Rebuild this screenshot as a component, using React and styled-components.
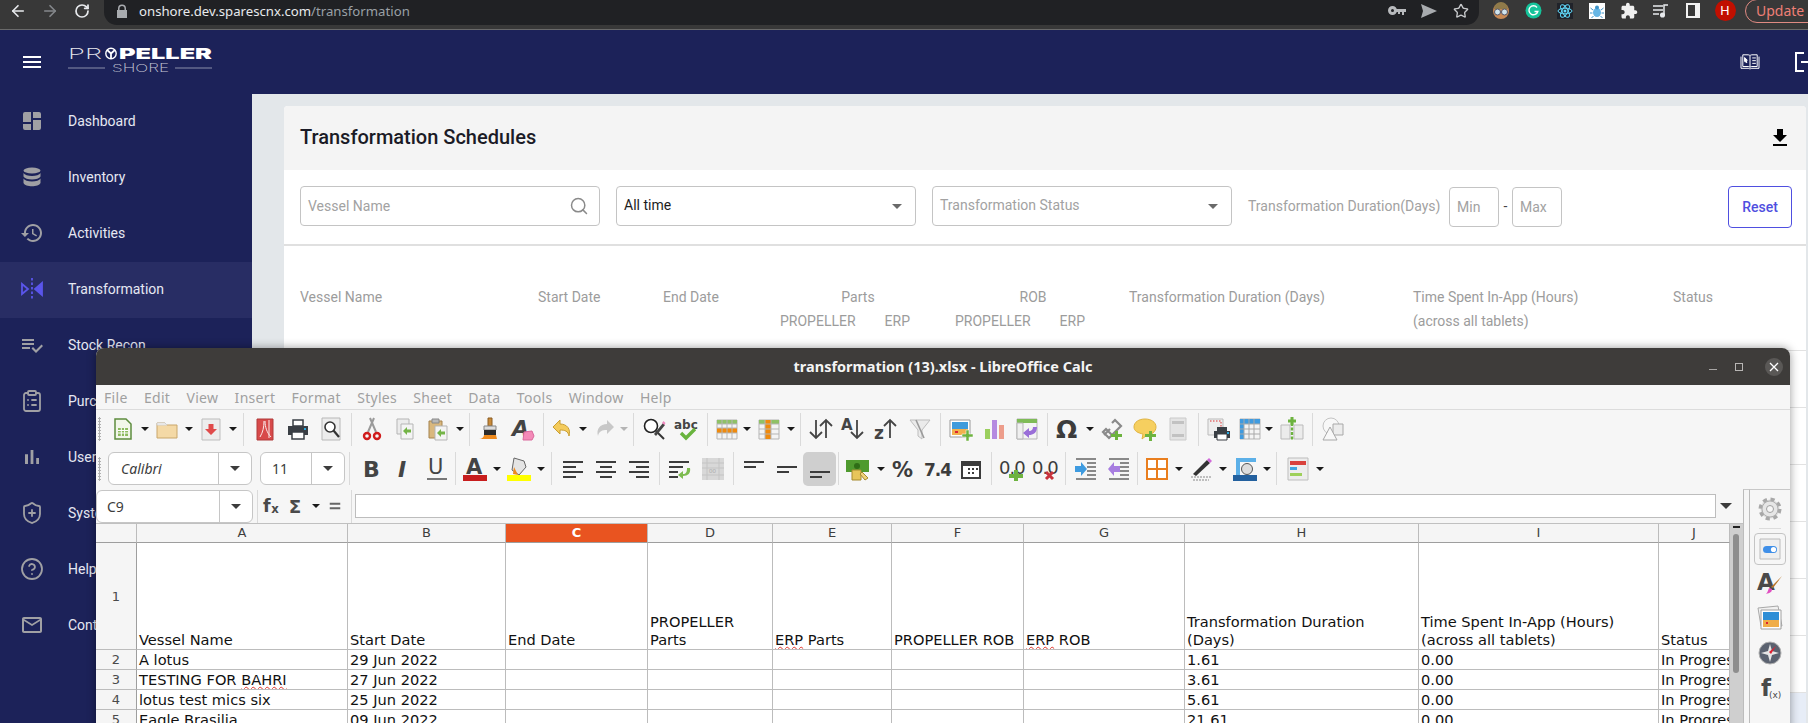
import styled, { createGlobalStyle } from "styled-components";
import { ArrowLeft, ArrowRight, RotateCw, Star, Search, ClipboardList, ShieldPlus, CircleHelp } from "lucide-react";

const GlobalStyle = createGlobalStyle`
  html, body { margin: 0; padding: 0; width: 1808px; height: 723px; overflow: hidden; background: #fff; }
  * { box-sizing: border-box; }
`;

const Page = styled.div`
  position: relative;
  width: 1808px;
  height: 723px;
  overflow: hidden;
  font-family: Roboto, "Liberation Sans", sans-serif;
`;

/* browser chrome */
const BrowserBar = styled.div`
  height: 30px;
  background: #383838;
  border-bottom: 1px solid #6a6a6a;
  display: flex;
  padding-left: 2px;
`;
const BarSlot = styled.div`
  width: 32px;
  height: 21px;
  flex: none;
  display: flex;
  align-items: center;
  justify-content: center;
  color: ${(p) => p.$color || "#e8eaed"};
`;
const Omnibox = styled.div`
  width: 1375px;
  height: 25px;
  margin-left: 6px;
  margin-right: 6px;
  padding: 0 2px 4px 12px;
  flex: none;
  background: #202124;
  border-radius: 0 0 13px 13px;
  display: flex;
  align-items: center;
`;
const Url = styled.div`
  margin-left: 11px;
  flex: 1;
  font-family: "Noto Sans", sans-serif;
  font-size: 13.2px;
  color: #e8eaed;
  span { color: #9aa0a6; }
`;
const UpdatePill = styled.div`
  margin-left: 4px;
  width: 90px;
  height: 24px;
  margin-top: -1px;
  flex: none;
  border: 1px solid #e08a82;
  border-radius: 12px;
  padding-left: 10px;
  font-family: "Noto Sans", sans-serif;
  font-size: 14px;
  line-height: 21px;
  color: #ee7f76;
`;
const Avatar = styled.div`
  width: 21px;
  height: 21px;
  border-radius: 50%;
  background: #c10f00;
  color: #fff;
  font-size: 13px;
  text-align: center;
  line-height: 21px;
`;

/* app header */
const Header = styled.header`
  height: 64px;
  background: #1c2259;
  display: flex;
  align-items: center;
  padding-left: 20px;
  color: #fff;
`;
const Actions = styled.div`
  margin-left: auto;
  margin-right: -16px;
  display: flex;
  align-items: center;
  gap: 34px;
`;
const LogoWrap = styled.div`
  margin-left: 24px;
  display: flex;
`;

const Body = styled.div`
  display: flex;
  height: 629px;
`;
const Sidebar = styled.nav`
  width: 252px;
  flex: none;
  background: #1c2259;
`;
const NavItem = styled.div`
  height: 56px;
  padding-left: 20px;
  padding-bottom: 2px;
  display: flex;
  align-items: center;
  gap: 24px;
  font-size: 14px;
  color: #e6e8f2;
  background: ${(p) => (p.$active ? "#282d64" : "transparent")};
  svg { flex: none; color: ${(p) => (p.$active ? "#5a55ea" : "#a0a0a4")}; }
`;

const Main = styled.main`
  flex: 1;
  background: #e3e7ea;
  padding: 12px 2px 0 32px;
`;
const Card = styled.section`
  background: #fff;
  border-radius: 4px 4px 0 0;
  overflow: hidden;
`;
const CardHead = styled.div`
  height: 64px;
  background: #f4f4f4;
  padding: 0 14px 0 16px;
  display: flex;
  align-items: center;
  justify-content: space-between;
`;
const CardTitle = styled.h1`
  margin: 0 0 2px;
  font-size: 20px;
  font-weight: 500;
  color: #1b1b26;
`;
const Filters = styled.div`
  height: 76px;
  padding: 16px 14px 0 16px;
  border-bottom: 2px solid #e0e0e0;
  display: flex;
  align-items: flex-start;
`;
const Field = styled.div`
  width: 300px;
  height: 40px;
  margin-right: 16px;
  flex: none;
  border: 1px solid #c4c4c4;
  border-radius: 4px;
  padding: 0 7px ${(p) => (p.$select ? 2 : 0)}px;
  display: flex;
  align-items: center;
  justify-content: space-between;
  font-size: 14px;
  color: ${(p) => (p.$filled ? "#1c1c1c" : "#a2a2a2")};
  svg { flex: none; margin-right: 3px; }
`;
const Caret = styled.i`
  width: 0;
  height: 0;
  margin: 2px 6px 0 0;
  border: 5px solid transparent;
  border-top-color: #6a6a6a;
  border-bottom: 0;
`;
const FilterLabel = styled.div`
  width: 201px;
  height: 40px;
  flex: none;
  line-height: 40px;
  font-size: 14px;
  white-space: nowrap;
  color: #a2a2a2;
`;
const SmallInput = styled.div`
  width: 50px;
  height: 40px;
  margin-top: 1px;
  flex: none;
  border: 1px solid #c4c4c4;
  border-radius: 4px;
  padding-left: 7px;
  line-height: 38px;
  font-size: 14px;
  color: #a2a2a2;
`;
const Dash = styled.div`
  width: 13px;
  text-align: center;
  line-height: 40px;
  font-size: 14px;
  color: #444;
`;
const ResetButton = styled.button`
  margin-left: auto;
  width: 64px;
  height: 42px;
  border: 1px solid #4f4fe0;
  border-radius: 4px;
  background: #fff;
  font: 500 14px Roboto, sans-serif;
  color: #4f4fe0;
`;
const TableHead = styled.div`
  height: 105px;
  padding: 39px 0 0 16px;
  border-bottom: 1px solid #e2e2e2;
  display: grid;
  grid-template-columns: 238px 125px 117px 175px 174px 284px 260px 1fr;
  font-size: 14px;
  line-height: 24px;
  color: #9c9c9c;
`;
const HeadGroup = styled.div`
  display: flex;
  flex-direction: column;
`;
const GroupTitle = styled.div`
  width: 156px;
  text-align: center;
`;
const GroupCols = styled.div`
  display: flex;
  gap: 29px;
`;
const EmptyRow = styled.div`
  height: 57px;
  border-bottom: 1px solid #e2e2e2;
`;
const CardFoot = styled.div`
  height: 40px;
  background: #e7edf7;
`;

/* calc window */
const CalcWindow = styled.div`
  position: absolute;
  left: 96px;
  top: 348px;
  width: 1694px;
  height: 400px;
  border-radius: 8px 8px 0 0;
  background: #f6f6f6;
  box-shadow: 0 0 10px rgba(0, 0, 0, 0.4);
  overflow: hidden;
  font-family: "Noto Sans", sans-serif;
  display: flex;
  flex-direction: column;
`;
const TitleBar = styled.div`
  position: relative;
  height: 37px;
  flex: none;
  background: #3e3c3a;
  color: #f4f4f4;
  font-size: 14.5px;
  font-weight: 700;
  text-align: center;
  line-height: 37px;
`;
const WinControls = styled.div`
  position: absolute;
  right: 7px;
  top: 0;
  height: 37px;
  display: flex;
  align-items: center;
  gap: 18px;
`;
const Minimize = styled.i`
  width: 8px;
  height: 1px;
  margin-top: 6px;
  background: #a8a6a4;
`;
const Maximize = styled.i`
  width: 8px;
  height: 8px;
  border: 1px solid #b8b6b4;
`;
const CloseBtn = styled.div`
  width: 18px;
  height: 18px;
  margin-left: 4px;
  border-radius: 50%;
  background: #5a5856;
  display: flex;
  align-items: center;
  justify-content: center;
`;
const MenuBar = styled.div`
  height: 25px;
  flex: none;
  padding-left: 8px;
  border-bottom: 1px solid #dcdcdc;
  display: flex;
  align-items: center;
  gap: 16.3px;
  font-size: 14px;
  letter-spacing: 0.3px;
  color: #a0a0a0;
`;
const Toolbar = styled.div`
  height: ${(p) => p.$h}px;
  flex: none;
  display: flex;
  align-items: center;
`;
const Grip = styled.i`
  width: ${(p) => p.$w}px;
  height: 24px;
  flex: none;
  background: radial-gradient(circle, #b0b0b0 1px, transparent 1.2px) 2px 0 / 3px 3px repeat-y;
`;
const Tool = styled.div`
  width: ${(p) => p.$w || 33}px;
  height: 34px;
  flex: none;
  display: flex;
  align-items: center;
  justify-content: center;
  border-radius: 5px;
  background: ${(p) => (p.$on ? "#cfcfcf" : "transparent")};
`;
const Arrow = styled.i`
  width: ${(p) => p.$w || 11}px;
  height: 4px;
  flex: none;
  display: flex;
  justify-content: center;
  &::after {
    content: "";
    border: 4px solid transparent;
    border-top-color: ${(p) => (p.$off ? "#b5b5b5" : "#1a1a1a")};
    border-bottom: 0;
  }
`;
const Sep = styled.i`
  width: ${(p) => p.$w || 8}px;
  height: 33px;
  flex: none;
  display: flex;
  justify-content: center;
  &::after { content: ""; width: 1px; background: #dadada; }
`;
const Combo = styled.div`
  width: ${(p) => p.$w}px;
  height: 33px;
  margin-right: ${(p) => p.$mr || 0}px;
  flex: none;
  background: #fff;
  border: 1px solid #c6c6c6;
  border-radius: 6px;
  display: flex;
  font-size: 14px;
  font-style: ${(p) => (p.$italic ? "italic" : "normal")};
  color: #3c3c3c;
`;
const ComboText = styled.div`
  flex: 1;
  padding-left: ${(p) => p.$pl}px;
  line-height: 31px;
`;
const ComboDrop = styled.div`
  width: ${(p) => p.$w}px;
  border-left: 1px solid #c6c6c6;
  display: flex;
  align-items: center;
  justify-content: center;
  &::after {
    content: "";
    border: 5px solid transparent;
    border-top-color: #3c3c3c;
    border-bottom: 0;
  }
`;
const Workspace = styled.div`
  flex: 1;
  display: flex;
  min-height: 0;
`;
const SheetColumn = styled.div`
  width: 1647px;
  flex: none;
  display: flex;
  flex-direction: column;
`;
const FormulaBar = styled.div`
  height: 34px;
  flex: none;
  display: flex;
  align-items: center;
`;
const FormulaInput = styled.div`
  width: 1361px;
  height: 24px;
  flex: none;
  background: #fff;
  border: 1px solid #bdbdbd;
`;
const FormulaDrop = styled.div`
  margin-left: 4px;
  border: 6px solid transparent;
  border-top-color: #3c3c3c;
  border-bottom: 0;
`;
const SheetWrap = styled.div`
  flex: 1;
  display: flex;
  min-height: 0;
  border-top: 1px solid #c0c0c0;
`;
const Sheet = styled.div`
  width: 1634px;
  flex: none;
  display: grid;
  grid-template-columns: 41px 211px 158px 142px 125px 119px 132px 161px 234px 240px 71px;
  grid-template-rows: 19px 107px repeat(6, 20px);
  background: #fff;
  overflow: hidden;
  font-family: "DejaVu Sans", sans-serif;
`;
const ColHead = styled.div`
  background: ${(p) => (p.$on ? "#e95420" : "#f5f5f5")};
  color: ${(p) => (p.$on ? "#fff" : "#3e3e3e")};
  font-weight: ${(p) => (p.$on ? 700 : 400)};
  border-right: 1px solid #bcbcbc;
  border-bottom: 1px solid #9e9e9e;
  text-align: center;
  font-size: 13px;
  line-height: 18px;
`;
const RowHead = styled.div`
  background: #f5f5f5;
  color: #4a4a4a;
  border-right: 1px solid #9e9e9e;
  border-bottom: 1px solid #bcbcbc;
  display: flex;
  align-items: center;
  justify-content: center;
  font-size: 13px;
`;
const Cell = styled.div`
  border-right: 1px solid #bcbcbc;
  border-bottom: 1px solid #bcbcbc;
  padding-left: 2px;
  color: #111;
  font-size: 14.6px;
  line-height: 18px;
  white-space: ${(p) => (p.$head ? "normal" : "nowrap")};
  overflow: hidden;
  display: flex;
  align-items: flex-end;
`;
const Squiggle = styled.span`
  text-decoration: underline wavy #e2332a 1px;
  text-underline-offset: 1px;
`;
const Scrollbar = styled.div`
  position: relative;
  width: 13px;
  flex: none;
  background: #cfcfcf;
`;
const ScrollMinus = styled.i`
  position: absolute;
  left: 3px;
  top: 2px;
  width: 7px;
  height: 2px;
  background: #222;
`;
const ScrollThumb = styled.i`
  position: absolute;
  left: 3px;
  top: 10px;
  width: 6px;
  height: 139px;
  border-radius: 3px;
  background: #8e8e8e;
`;
const DeckStrip = styled.div`
  width: 6px;
  flex: none;
  border-left: 1px solid #bcbcbc;
  border-top: 1px solid #c8c8c8;
`;
const Deck = styled.div`
  flex: 1;
  border-left: 1px solid #bcbcbc;
  border-top: 1px solid #c8c8c8;
  display: flex;
  flex-direction: column;
  align-items: center;
  padding-top: 7px;
`;
const DeckTool = styled.div`
  width: 32px;
  height: ${(p) => p.$h || 35}px;
  display: flex;
  align-items: center;
  justify-content: center;
  border: 1px solid ${(p) => (p.$on ? "#c4c4c4" : "transparent")};
  border-radius: 4px;
`;
const DeckRule = styled.i`
  width: 22px;
  height: 1px;
  margin: 7px 0 4px;
  background: #dcdcdc;
`;

const t = { fontFamily: "'DejaVu Sans', sans-serif", fontWeight: 700 };

/* hand drawn icons, 24 box */
const ICONS = {
  newsheet: <><path d="M4 2h11l5 5v15H4z" fill="#f2f7ea" stroke="#5d8c3e" strokeWidth="1.5" /><path d="M7 11h10v8H7z" fill="#8dbb5e" /><path d="M7 13.5h10M7 16h10M10.3 11v8M13.6 11v8" stroke="#fff" /></>,
  folder: <><path d="M2 6h8l2 2h10v13H2z" fill="#f4d9a6" stroke="#c9a66b" /><path d="M2 6h8l2 2H2z" fill="#fff" stroke="#cfcfcf" /></>,
  save: <><path d="M3 2h18v21H3z" fill="#ededed" stroke="#bdbdbd" /><path d="M9.5 7h5v5h3.5l-6 6-6-6h3.500z" fill="#e04b4b" /></>,
  pdf: <><path d="M4 2h16v21H4z" fill="#d84a4a" stroke="#b03a3a" /><path d="M7 20c3-5 4-10 4-16M12 4c0 6 2 12 6 16M16 3v18" stroke="#fbeaea" fill="none" /></>,
  print: <><path d="M7 3h10v6H7z" fill="#fff" stroke="#3a3f45" strokeWidth="1.5" /><path d="M2 9h20v9H2z" fill="#3a3f45" /><path d="M6 15h12v7H6z" fill="#fff" stroke="#3a3f45" strokeWidth="1.5" /><path d="M18 11h2v2h-2z" fill="#27a9e0" /></>,
  preview: <><path d="M3 1h18v22H3z" fill="#ececec" stroke="#b8b8b8" /><circle cx="11" cy="10" r="5" fill="#fff" stroke="#333" strokeWidth="1.6" /><path d="M14.500 13.500 20 20" stroke="#333" strokeWidth="2.2" /></>,
  cut: <><path d="M8 15 14 1M16 15 10 1" stroke="#9a9a9a" strokeWidth="2" /><circle cx="7" cy="19" r="3" fill="none" stroke="#d01c1c" strokeWidth="2.4" /><circle cx="17" cy="19" r="3" fill="none" stroke="#d01c1c" strokeWidth="2.4" /></>,
  copy: <><path d="M4 2h12v15H4z" fill="#ececec" stroke="#b5b5b5" /><path d="M8 7h12v15H8z" fill="#f4f4f4" stroke="#b5b5b5" /><path d="M10 14l4-4v2.500h4v3h-4V18z" fill="#74b447" /></>,
  paste: <><path d="M3 4h13v17H3z" fill="#d9b77d" stroke="#a5834f" /><path d="M6 2h7v4H6z" fill="#b8b8b8" stroke="#888" /><path d="M9 9h12v14H9z" fill="#f4f4f4" stroke="#b5b5b5" /><path d="M11 16l4-4v2.500h4v3h-4V20z" fill="#74b447" /></>,
  brush: <><path d="M10 1h4v8h-4z" fill="#c98b3a" stroke="#8a5c22" /><path d="M6 9h12v4H6z" fill="#ddd" stroke="#888" /><path d="M6 13h12v5H6z" fill="#2b2b2b" /><path d="M6 18h12l1 4H1c3 0 5-2 5-4z" fill="#ee8a1d" /></>,
  clearfmt: <><text x="1" y="19" fontSize="22" fill="#444" fontStyle="italic" style={t}>A</text><path d="M13 15l8-1 2 5-2 4-9 0z" fill="#f48ab8" stroke="#d9689b" /></>,
  undo: <path d="M9 3 2 10l7 7v-4c5 0 8 1 9 6 2-7-2-12-9-12z" fill="#f4cb5b" stroke="#c99e33" />,
  redo: <path d="M15 3l7 7-7 7v-4c-5 0-8 1-9 6-2-7 2-12 9-12z" fill="#c8c8c8" />,
  find: <><circle cx="9" cy="9" r="6.500" fill="#fff" stroke="#222" strokeWidth="1.6" /><path d="M14 14l8 8" stroke="#333" strokeWidth="2" /><path d="M12 17l9-11 2 2-9 11z" fill="#444" /><path d="M20 6l1.500-2 2 2-1 2z" fill="#f18ac0" /></>,
  spell: <><text x="-1" y="12" fontSize="12" fill="#444" style={t}>abc</text><path d="M6 16l5 5 9-9" stroke="#69b43e" strokeWidth="3.400" fill="none" /></>,
  rows: <><path d="M2 3h20v19H2z" fill="#f4f4f4" stroke="#b5b5b5" /><path d="M2 3h20v4H2z" fill="#8fc166" /><path d="M2 11h20v5H2z" fill="#f08a0c" /><path d="M2 7h20M2 11h20M2 16h20M7 3v19M12 3v19M17 3v19" stroke="#b5b5b5" /></>,
  cols: <><path d="M2 3h20v19H2z" fill="#f4f4f4" stroke="#b5b5b5" /><path d="M2 3h20v4H2z" fill="#8fc166" /><path d="M8 3h6v19H8z" fill="#f08a0c" /><path d="M2 7h20M2 12h20M2 17h20M8 3v19M14 3v19" stroke="#b5b5b5" /></>,
  sort: <path d="M7 21V3M1 15l6 6 6-6M17 3v18M11 9l6-6 6 6" stroke="#444" strokeWidth="1.800" fill="none" />,
  az: <><text x="-1" y="13" fontSize="15" fill="#444" style={t}>A</text><path d="M15 3v18M9 15l6 6 6-6" stroke="#444" strokeWidth="1.800" fill="none" /></>,
  za: <><text x="-1" y="22" fontSize="17" fill="#444" style={t}>z</text><path d="M15 21V3M9 9l6-6 6 6" stroke="#444" strokeWidth="1.800" fill="none" /></>,
  filter: <><path d="M2 3h20l-8 10v9l-4-3v-6z" fill="#ebebeb" stroke="#bdbdbd" /><path d="M8 3l8 18" stroke="#9a9a9a" strokeWidth="1.600" /></>,
  image: <><path d="M1 3h20v17H1z" fill="#fff" stroke="#9a9a9a" /><path d="M3 5h16v7H3z" fill="#3f9bdc" /><path d="M3 12h16v6H3z" fill="#f2b14d" /><path d="M6 14h3v2H6z" fill="#d23" /><path d="M17 13h3v4h4v3h-4v4h-3v-4h-4v-3h4z" fill="#6db33f" stroke="#fff" strokeWidth=".5" /></>,
  chart: <><path d="M3 12h5v10H3z" fill="#9bcf5e" /><path d="M10 3h5v19h-5z" fill="#b58ae0" /><path d="M17 8h5v14h-5z" fill="#ed9d8b" /></>,
  pivot: <><path d="M2 2h20v20H2z" fill="#f4f4f4" stroke="#b5b5b5" /><path d="M2 2h20v4H2z" fill="#7fbb57" /><path d="M2 6h6v16H2z" fill="#efefef" stroke="#b5b5b5" /><path d="M22 10c0 6-4 8-8 8v3l-6-5 6-5v3c3 0 4-2 4-4z" fill="#9a6fd8" /></>,
  omega: <text x="0" y="21" fontSize="25" fill="#3c3c3c" style={t}>Ω</text>,
  link: <><path d="M4 18l6-6M10 20l8-8M12 6l3-3 6 6-3 3M3 15l3-3 6 6-3 3z" stroke="#8a8a8a" strokeWidth="2.200" fill="none" /><path d="M15 14h3v3h4v3h-4v3h-3v-3h-4v-3h4z" fill="#6db33f" /></>,
  comment: <><path d="M12 2c6 0 11 3 11 8s-5 8-9 8l-5 4 1-5c-5-1-9-3-9-7 0-5 5-8 11-8z" fill="#f6cf5f" stroke="#e0b33f" /><path d="M16 14h3v3h4v3h-4v4h-3v-4h-4v-3h4z" fill="#6db33f" /></>,
  header: <><path d="M4 1h16v22H4z" fill="#e4e4e4" stroke="#cacaca" /><path d="M6 4h12v3H6zM6 17h12v3H6z" fill="#c2c2c2" /></>,
  printarea: <><path d="M1 2h15v16H1z" fill="#eee" stroke="#bbb" /><path d="M3 4h11v11" stroke="#d33" strokeDasharray="1.500 1.500" fill="none" /><path d="M10 10h10v4h3v7H7v-7h3z" fill="#3a3f45" /><path d="M10 17h10v6H10z" fill="#fff" stroke="#3a3f45" /><path d="M20 15h2v2h-2z" fill="#27a9e0" /></>,
  bluetable: <><path d="M2 2h20v20H2z" fill="#f4f4f4" stroke="#b5b5b5" /><path d="M2 2h20v5H2zM2 2h4v20H2z" fill="#3f9be0" /><path d="M2 7h20M2 12h20M2 17h20M6 2v20M11 2v20M16 2v20" stroke="#a8a8a8" /></>,
  split: <><path d="M1 8h9v14H1zM14 8h9v14h-9z" fill="#ececec" stroke="#bbb" /><path d="M12 6v17" stroke="#6db33f" strokeWidth="2.400" strokeDasharray="3 1.500" /><path d="M10.500 0h3v2.500H16v3h-2.500V8h-3V5.500H8v-3h2.500z" fill="#6db33f" /></>,
  shapes: <><circle cx="10" cy="9" r="8" fill="#f8f8f8" stroke="#c4c4c4" /><path d="M12 7h10v11H12z" fill="#ececec" stroke="#a8a8a8" /><path d="M9 10l7 13H2z" fill="#f8f8f8" stroke="#a8a8a8" /></>,
  bold: <text x="4" y="20" fontSize="22" fill="#444" style={t}>B</text>,
  italic: <text x="6" y="20" fontSize="22" fill="#444" fontStyle="italic" style={t}>I</text>,
  underline: <><text x="3" y="17" fontSize="21" fill="#444" style={{ ...t, fontWeight: 400 }}>U</text><path d="M2 22h20" stroke="#777" strokeWidth="2" /></>,
  fontcolor: <><text x="3" y="17" fontSize="21" fill="#444" style={t}>A</text><path d="M0 18h24v6H0z" fill="#c71d1d" /></>,
  bgcolor: <><path d="M7 1l10 3 2 6-7 8-7-5z" fill="#e4e4e4" stroke="#666" /><path d="M7 10l-1 7 5 1z" fill="#ee8a1d" /><path d="M0 18h24v6H0z" fill="#ffff00" /></>,
  alignl: <path d="M2 5h20M2 10h13M2 15h20M2 20h13" stroke="#3c3c3c" strokeWidth="1.800" />,
  alignc: <path d="M2 5h20M6 10h12M2 15h20M6 20h12" stroke="#3c3c3c" strokeWidth="1.800" />,
  alignr: <path d="M2 5h20M9 10h13M2 15h20M9 20h13" stroke="#3c3c3c" strokeWidth="1.800" />,
  wrap: <><path d="M1 5h20M1 10h14M1 15h9M1 20h9" stroke="#3c3c3c" strokeWidth="1.800" /><path d="M22 11c1 5-2 8-7 8v3l-5-4 5-4v3c3 0 4-2 4-6z" fill="#7dbb4f" /></>,
  merge: <><path d="M1 1h22v22H1z" fill="#d8d8d8" /><path d="M1 6h22M1 11h22M1 18h22M6 1v22M18 1v22" stroke="#c4c4c4" /><text x="8" y="16" fontSize="6" fill="#aaa">00</text></>,
  vtop: <path d="M2 5h20M2 10h12" stroke="#3c3c3c" strokeWidth="1.800" />,
  vmid: <path d="M2 10h20M2 15h12" stroke="#3c3c3c" strokeWidth="1.800" />,
  vbot: <path d="M2 15h20M2 20h12" stroke="#3c3c3c" strokeWidth="1.800" />,
  currency: <><path d="M0 3h23v12H0z" fill="#4f9a2e" /><circle cx="11" cy="9" r="3" fill="#2f6d17" /><path d="M6 13h9v10H6z" fill="#e8c55a" stroke="#a68a2f" /><path d="M16 15l6 6-3 2-5-6z" fill="#f0d27a" stroke="#a68a2f" /></>,
  percent: <text x="-1" y="20" fontSize="21" fill="#3c3c3c" style={t}>%</text>,
  number: <text x="-2" y="19" fontSize="17" letterSpacing="-1" fill="#3c3c3c" style={t}>7.4</text>,
  date: <><path d="M2 4h20v18H2z" fill="#3c3c3c" /><path d="M4 9h16v11H4z" fill="#fff" /><path d="M9 11h2v2H9zm4 0h2v2h-2zm4 0h2v2h-2zM9 15h2v2H9zm4 0h2v2h-2z" fill="#3c3c3c" /></>,
  decadd: <><text x="-1" y="17" fontSize="18" letterSpacing="-1" fill="#3c3c3c" style={{ ...t, fontWeight: 400 }}>0.0</text><path d="M14 13h4v4h5v4h-5v3h-4v-3H9v-4h5z" fill="#6db33f" /></>,
  decdel: <><text x="-1" y="17" fontSize="18" letterSpacing="-1" fill="#3c3c3c" style={{ ...t, fontWeight: 400 }}>0.0</text><path d="M13 15l7 7M20 15l-7 7" stroke="#c8323c" strokeWidth="3" /></>,
  indent: <><path d="M13 6h9M13 10h9M13 14h9M13 18h9M2 22h20M2 2h20" stroke="#666" strokeWidth="1.300" /><path d="M1 9h6V5l6 7-6 7v-4H1z" fill="#3e9be0" /></>,
  outdent: <><path d="M13 6h9M13 10h9M13 14h9M13 18h9M2 22h20M2 2h20" stroke="#666" strokeWidth="1.300" /><path d="M13 9H7V5l-6 7 6 7v-4h6z" fill="#a77de0" /></>,
  border: <path d="M2 2h20v20H2zM12 2v20M2 12h20" fill="#fff" stroke="#e97e1e" strokeWidth="2" />,
  linestyle: <><path d="M4 17 18 3l3 3L7 19z" fill="#333" /><path d="M18 3l2-2 3 3-2 2z" fill="#d06ad8" /><path d="M2 20h20M4 23h16" stroke="#888" strokeDasharray="2 1" /></>,
  bordercolor: <><path d="M3 1h20v4H7v13H3z" fill="#5cb0e8" /><circle cx="14" cy="12" r="5.500" fill="#ddd" stroke="#555" /><path d="M0 18h24v6H0z" fill="#23609e" /></>,
  cond: <><path d="M2 1h20v22H2z" fill="#ededed" stroke="#bdbdbd" /><path d="M4 4h16v4H4z" fill="#d9423d" /><path d="M4 10h7v3H4z" fill="#43a5e0" /><path d="M4 16h12v3H4z" fill="#9ed05a" /></>,
  gear: <><circle cx="12" cy="12" r="9.500" fill="#dcdcdc" stroke="#a8a8a8" strokeWidth="4" strokeDasharray="4 3.500" /><circle cx="12" cy="12" r="8" fill="#e6e6e6" stroke="#b0b0b0" /><circle cx="12" cy="12" r="3.500" fill="#f6f6f6" stroke="#a0a0a0" /></>,
  props: <><path d="M2 2h20v20H2z" fill="#efefef" stroke="#bcbcbc" /><rect x="5" y="9" width="14" height="7" rx="3.500" fill="#3f8fe8" /><circle cx="15.500" cy="12.500" r="2.600" fill="#fff" /></>,
  styles: <><text x="-1" y="19" fontSize="23" fill="#4a4a4a" style={t}>A</text><path d="M24 5l-9 12-2-1z" fill="#b9762a" /><path d="M11 17l3 1c0 3-2 4-6 5 2-2 2-4 3-6z" fill="#e04ec0" /></>,
  gallery: <><path d="M0 2 20 0l4 20H3z" fill="#f1f1f1" stroke="#a8a8a8" /><path d="M3 4h20v19H3z" fill="#fff" stroke="#a0a0a0" /><path d="M5 6h16v8H5z" fill="#2e8ed6" /><path d="M5 14h16v7H5z" fill="#f0ad48" /><path d="M8 16h2v2H8z" fill="#d23" /></>,
  nav: <><circle cx="12" cy="12" r="11" fill="#5b6270" stroke="#b0b0b0" /><path d="M12 3l2 7 7 2-7 2-2 7-2-7-7-2 7-2z" fill="#e6e6e6" /><path d="M18 5l-5 8-2-2z" fill="#d23" /></>,
  fx: <><text x="3" y="20" fontSize="23" fill="#4a4a4a" style={t}>f</text><text x="11" y="22" fontSize="9" fill="#4a4a4a" style={{ ...t, fontWeight: 400 }}>(x)</text></>,
  fxbar: <><text x="0" y="19" fontSize="21" fill="#4a4a4a" style={t}>f</text><text x="10" y="20" fontSize="14" fill="#4a4a4a" style={t}>x</text></>,
  sigma: <text x="2" y="20" fontSize="22" fill="#4a4a4a" style={t}>Σ</text>,
  equals: <path d="M5 9h14M5 15h14" stroke="#666" strokeWidth="2.400" />,
};

const Ico = ({ name, size = 24 }) => (
  <svg width={size} height={size} viewBox="0 0 24 24" style={{ overflow: "visible" }}>{ICONS[name]}</svg>
);

const MuiIcon = ({ d, size = 24, color = "currentColor" }) => (
  <svg width={size} height={size} viewBox="0 0 24 24" fill={color}><path d={d} /></svg>
);

const PATHS = {
  menu: "M3 18h18v-2H3v2zm0-5h18v-2H3v2zm0-7v2h18V6H3z",
  history: "M13 3c-4.97 0-9 4.03-9 9H1l3.89 3.89.07.14L9 12H6c0-3.87 3.13-7 7-7s7 3.13 7 7-3.13 7-7 7c-1.93 0-3.68-.79-4.94-2.06l-1.42 1.42C8.27 19.99 10.51 21 13 21c4.97 0 9-4.03 9-9s-4.03-9-9-9zm-1 5v5l4.28 2.54.72-1.21-3.5-2.08V8H12z",
  recon: "M14 10H2v2h12v-2zm0-4H2v2h12V6zM2 16h8v-2H2v2zm19.500-4.500L23 13l-6.990 7-4.510-4.500L13 14l3.010 3 5.490-5.500z",
  bars: "M5 9.200h3V19H5zM10.600 5h2.800v14h-2.800zm5.600 8H19v6h-2.800z",
  mail: "M20 4H4c-1.100 0-1.990.9-1.990 2L2 18c0 1.100.9 2 2 2h16c1.100 0 2-.9 2-2V6c0-1.100-.9-2-2-2zm0 14H4V8l8 5 8-5v10zm-8-7L4 6h16l-8 5z",
  download: "M19 9h-4V3H9v6H5l7 7 7-7zM5 18v2h14v-2H5z",
  puzzle: "M20.500 11H19V7c0-1.100-.9-2-2-2h-4V3.500C13 2.120 11.880 1 10.500 1S8 2.120 8 3.500V5H4c-1.100 0-1.990.9-1.990 2v3.800H3.500c1.490 0 2.700 1.210 2.700 2.700s-1.210 2.700-2.700 2.700H2V20c0 1.100.9 2 2 2h3.800v-1.500c0-1.490 1.210-2.700 2.700-2.700 1.490 0 2.700 1.210 2.700 2.700V22H17c1.100 0 2-.9 2-2v-4h1.500c1.380 0 2.500-1.120 2.500-2.500S21.880 11 20.500 11z",
};

const DashIcon = () => (
  <svg width="24" height="24" viewBox="0 0 24 24" fill="currentColor">
    <path d="M3 5a2 2 0 0 1 2-2h6v10H3zM13 3h6a2 2 0 0 1 2 2v4h-8zM13 11h8v8a2 2 0 0 1-2 2h-6zM3 15h8v6H5a2 2 0 0 1-2-2z" />
  </svg>
);
const StackIcon = () => (
  <svg width="24" height="24" viewBox="0 0 24 24" fill="currentColor">
    <ellipse cx="12" cy="5.500" rx="8.500" ry="3" />
    <path d="M3.500 8c1 2 4.500 3 8.500 3s7.500-1 8.500-3v3.500c-1 2-4.500 3-8.500 3s-7.500-1-8.500-3zM3.500 13.500c1 2 4.500 3 8.500 3s7.500-1 8.500-3V18c-1 2.200-4.500 3.200-8.500 3.200S4.500 20.200 3.500 18z" />
  </svg>
);
const FlipIcon = () => (
  <svg width="24" height="24" viewBox="0 0 24 24" fill="none" stroke="currentColor" strokeWidth="1.800">
    <path d="M12 1v22" strokeDasharray="2.500 2" />
    <path d="M2 7v10l6-5z" />
    <path d="M22 6v12l-7-6z" fill="currentColor" />
  </svg>
);
const LockIcon = () => (
  <svg width="12" height="14" viewBox="0 0 12 14" fill="#a8abaf">
    <path d="M2 6V4.500a4 4 0 0 1 8 0V6h1v8H1V6zm1.500 0h5V4.500a2.500 2.500 0 0 0-5 0z" />
  </svg>
);
const KeyIcon = () => (
  <svg width="18" height="12" viewBox="0 0 18 12" fill="#b8babd">
    <path d="M4.500 1a4.500 4.500 0 1 1 0 9 4.500 4.500 0 0 1 0-9zm0 3a1.500 1.500 0 1 0 0 3 1.500 1.500 0 0 0 0-3zM8 4h10v3h-2v3h-2V7h-2v2h-2V7H8z" />
  </svg>
);
const SendIcon = () => (
  <svg width="18" height="16" viewBox="0 0 18 16" fill="#a8abaf"><path d="M1 1l16 7-16 7 2-7-2-7zm3.500 5.800h5v2.400h-5z" /></svg>
);
const FaceExt = () => (
  <svg width="18" height="18" viewBox="0 0 18 18">
    <circle cx="9" cy="9" r="8" fill="#c98a55" />
    <path d="M2 7a7 7 0 0 1 14 0z" fill="#8f7a4a" />
    <circle cx="5.500" cy="10" r="3" fill="#cfe4ee" stroke="#556" />
    <circle cx="12.500" cy="10" r="3" fill="#cfe4ee" stroke="#556" />
  </svg>
);
const GrammarlyExt = () => (
  <svg width="17" height="17" viewBox="0 0 17 17">
    <circle cx="8.500" cy="8.500" r="8" fill="#15c39a" />
    <path d="M12 5.500a4.500 4.500 0 1 0 .8 4H9.500" fill="none" stroke="#fff" strokeWidth="1.400" />
  </svg>
);
const ReactExt = () => (
  <svg width="16" height="16" viewBox="0 0 16 16">
    <path d="M0 0h16v16H0z" fill="#20232a" />
    <g fill="none" stroke="#61dafb">
      <ellipse cx="8" cy="8" rx="7" ry="2.800" />
      <ellipse cx="8" cy="8" rx="7" ry="2.800" transform="rotate(60 8 8)" />
      <ellipse cx="8" cy="8" rx="7" ry="2.800" transform="rotate(120 8 8)" />
    </g>
    <circle cx="8" cy="8" r="1.500" fill="#61dafb" />
  </svg>
);
const BugExt = () => (
  <svg width="16" height="16" viewBox="0 0 16 16">
    <path d="M0 0h16v16H0z" fill="#fff" />
    <ellipse cx="8" cy="9.500" rx="4" ry="4.500" fill="#67b7e6" />
    <circle cx="8" cy="4.500" r="2" fill="#3d93c9" />
    <path d="M4 7 1.500 5M12 7l2.500-2M3.500 10H1M12.500 10H15M4.500 13l-2 2M11.500 13l2 2" stroke="#3d93c9" />
  </svg>
);
const MediaIcon = () => (
  <svg width="16" height="14" viewBox="0 0 16 14" fill="none" stroke="#e8eaed" strokeWidth="1.500">
    <path d="M0 2h10M0 6h10M0 10h6M11 11V1h4" />
    <circle cx="9.500" cy="11" r="1.800" fill="#e8eaed" />
  </svg>
);
const PanelIcon = () => (
  <svg width="14" height="15" viewBox="0 0 14 15">
    <path d="M0 0h14v15H0z" fill="#f2f2f2" />
    <path d="M2 2h7v11H2z" fill="#383838" />
  </svg>
);
const BookIcon = () => (
  <svg width="20" height="18" viewBox="0 0 22 20" fill="none" stroke="#fff" strokeWidth="1.100">
    <path d="M1 4v13h8c1 0 1.500.5 2 1 .5-.5 1-1 2-1h8V4" />
    <path d="M3 2h6c1 0 1.500.5 2 1 .5-.5 1-1 2-1h6v13h-6c-1 0-1.500.5-2 1-.5-.5-1-1-2-1H3zM11 3v13" />
    <path d="M13.500 5.500h4M13.500 8.500h4M13.500 11.500h4" />
    <path d="M5 5l3 3-1.300.4.900 2-.9.400-.9-2L5 9.500z" fill="#fff" />
  </svg>
);
const LogoutIcon = () => (
  <svg width="30" height="22" viewBox="0 0 30 22" fill="none" stroke="#fff" strokeWidth="2">
    <path d="M10 2H2v18h8M7 11h22" />
  </svg>
);
const CloseX = () => (
  <svg width="10" height="10" viewBox="0 0 10 10" stroke="#fff" strokeWidth="1.300"><path d="M1 1l8 8M9 1l-8 8" /></svg>
);

const Logo = () => (
  <svg width="146" height="30" viewBox="0 0 146 30">
    <text x="0" y="12" fontSize="15" fontFamily="Inter, sans-serif" fontWeight="200" fill="#e8e8ee" textLength="34" lengthAdjust="spacingAndGlyphs">PR</text>
    <circle cx="43" cy="6.500" r="5.200" fill="none" stroke="#fff" strokeWidth="1.400" />
    <path d="M43 6.500 39 2.800M43 6.500 47 2.800M43 6.500v5.200" stroke="#fff" strokeWidth="1.800" />
    <text x="51" y="12" fontSize="15" fontFamily="Inter, sans-serif" fontWeight="900" fill="#fff" textLength="93" lengthAdjust="spacingAndGlyphs">PELLER</text>
    <path d="M0 21h37M107 21h37" stroke="#8a8eaa" />
    <text x="44" y="25" fontSize="11" fontFamily="Inter, sans-serif" fontWeight="200" fill="#c8cad8" textLength="57" lengthAdjust="spacingAndGlyphs">SHORE</text>
  </svg>
);

const NAV = [
  ["Dashboard", <DashIcon />],
  ["Inventory", <StackIcon />],
  ["Activities", <MuiIcon d={PATHS.history} />],
  ["Transformation", <FlipIcon />],
  ["Stock Recon", <MuiIcon d={PATHS.recon} />],
  ["Purchase Orders", <ClipboardList size={24} strokeWidth={1.8} />],
  ["Users", <MuiIcon d={PATHS.bars} />],
  ["System", <ShieldPlus size={24} strokeWidth={1.8} />],
  ["Help", <CircleHelp size={24} strokeWidth={1.8} />],
  ["Contact", <MuiIcon d={PATHS.mail} />],
];

const MENU = ["File", "Edit", "View", "Insert", "Format", "Styles", "Sheet", "Data", "Tools", "Window", "Help"];

// "|" separator, "v" dropdown arrow, anything else an icon; a number after it is the slot width
const TOOLS_ONE = [
  "newsheet", "v", "folder", "v", "save", "v", "|:10", "pdf", "print", "preview", "|", "cut", "copy", "paste", "v", "|",
  "brush", "clearfmt", "|", "undo:30", "v", "redo:30", "x", "|", "find", "spell", "|", "rows:30", "v", "cols:33", "v", "|",
  "sort", "az", "za", "filter", "|", "image", "chart", "pivot", "|", "omega", "v", "link", "comment", "header", "|",
  "printarea", "bluetable:28", "v", "split:34", "|", "shapes",
];
const TOOLS_TWO = [
  "bold", "italic", "underline", "|:5", "fontcolor", "v", "bgcolor", "v", "|:10", "alignl", "alignc", "alignr", "|", "wrap", "merge", "|",
  "vtop", "vmid", "vbot*", "|:5", "currency", "v:14", "percent", "number", "date", "|", "decadd", "decdel", "|", "indent", "outdent", "|:5",
  "border", "v", "linestyle", "v", "bordercolor", "v", "|:9", "cond", "v",
];

const renderTools = (list) =>
  list.map((item, i) => {
    const on = item.endsWith("*");
    const [name, w] = item.replace("*", "").split(":");
    const width = w ? Number(w) : undefined;
    if (name === "|") return <Sep key={i} $w={width} />;
    if (name === "v") return <Arrow key={i} $w={width} />;
    if (name === "x") return <Arrow key={i} $w={width} $off />;
    return (
      <Tool key={i} $w={width} $on={on}>
        <Ico name={name} />
      </Tool>
    );
  });

const COLS = ["A", "B", "C", "D", "E", "F", "G", "H", "I", "J"];
const ROWS = [
  ["A lotus", "29 Jun 2022", "1.61"],
  [<>TESTING FOR <Squiggle>BAHRI</Squiggle></>, "27 Jun 2022", "3.61"],
  ["lotus test mics six", "25 Jun 2022", "5.61"],
  ["Eagle Brasilia", "09 Jun 2022", "21.61"],
  ["Eagle Brasilia", "09 Jun 2022", "21.61"],
  ["Eagle Brasilia", "09 Jun 2022", "21.61"],
];
const HEADS = [
  "Vessel Name",
  "Start Date",
  "End Date",
  "PROPELLER Parts",
  <><Squiggle>ERP</Squiggle> Parts</>,
  "PROPELLER ROB",
  <><Squiggle>ERP</Squiggle> ROB</>,
  <>Transformation Duration<br />(Days)</>,
  <>Time Spent In-App (Hours)<br />(across all tablets)</>,
  "Status",
];

const Row = ({ n, r }) => (
  <>
    <RowHead>{n}</RowHead>
    <Cell><span>{r[0]}</span></Cell>
    <Cell>{r[1]}</Cell>
    <Cell />
    <Cell />
    <Cell />
    <Cell />
    <Cell />
    <Cell>{r[2]}</Cell>
    <Cell>0.00</Cell>
    <Cell>In Progress</Cell>
  </>
);

const App = () => (
  <Page>
    <GlobalStyle />
    <BrowserBar>
      <BarSlot><ArrowLeft size={18} strokeWidth={2.2} /></BarSlot>
      <BarSlot $color="#85888c"><ArrowRight size={18} strokeWidth={2.2} /></BarSlot>
      <BarSlot><RotateCw size={16} strokeWidth={2.6} /></BarSlot>
      <Omnibox>
        <LockIcon />
        <Url>onshore.dev.sparescnx.com<span>/transformation</span></Url>
        <BarSlot><KeyIcon /></BarSlot>
        <BarSlot><SendIcon /></BarSlot>
        <BarSlot $color="#c8cacd"><Star size={16} strokeWidth={2} /></BarSlot>
      </Omnibox>
      <BarSlot><FaceExt /></BarSlot>
      <BarSlot><GrammarlyExt /></BarSlot>
      <BarSlot><ReactExt /></BarSlot>
      <BarSlot><BugExt /></BarSlot>
      <BarSlot><MuiIcon d={PATHS.puzzle} size={18} color="#f0f0f0" /></BarSlot>
      <BarSlot><MediaIcon /></BarSlot>
      <BarSlot><PanelIcon /></BarSlot>
      <BarSlot><Avatar>H</Avatar></BarSlot>
      <UpdatePill>Update</UpdatePill>
    </BrowserBar>

    <Header>
      <MuiIcon d={PATHS.menu} />
      <LogoWrap><Logo /></LogoWrap>
      <Actions>
        <BookIcon />
        <LogoutIcon />
      </Actions>
    </Header>

    <Body>
      <Sidebar>
        {NAV.map(([label, icon]) => (
          <NavItem key={label} $active={label === "Transformation"}>
            {icon}
            {label}
          </NavItem>
        ))}
      </Sidebar>
      <Main>
        <Card>
          <CardHead>
            <CardTitle>Transformation Schedules</CardTitle>
            <MuiIcon d={PATHS.download} color="#000" />
          </CardHead>
          <Filters>
            <Field>
              Vessel Name
              <Search size={20} color="#8a8a8a" strokeWidth={1.8} />
            </Field>
            <Field $filled $select>
              All time
              <Caret />
            </Field>
            <Field $select>
              Transformation Status
              <Caret />
            </Field>
            <FilterLabel>Transformation Duration(Days)</FilterLabel>
            <SmallInput>Min</SmallInput>
            <Dash>-</Dash>
            <SmallInput>Max</SmallInput>
            <ResetButton>Reset</ResetButton>
          </Filters>
          <TableHead>
            <div>Vessel Name</div>
            <div>Start Date</div>
            <div>End Date</div>
            <HeadGroup>
              <GroupTitle>Parts</GroupTitle>
              <GroupCols><span>PROPELLER</span><span>ERP</span></GroupCols>
            </HeadGroup>
            <HeadGroup>
              <GroupTitle>ROB</GroupTitle>
              <GroupCols><span>PROPELLER</span><span>ERP</span></GroupCols>
            </HeadGroup>
            <div>Transformation Duration (Days)</div>
            <div>Time Spent In-App (Hours)<br />(across all tablets)</div>
            <div>Status</div>
          </TableHead>
          <EmptyRow />
          <EmptyRow />
          <EmptyRow />
          <EmptyRow />
          <EmptyRow />
          <EmptyRow />
          <CardFoot />
        </Card>
      </Main>
    </Body>

    <CalcWindow>
      <TitleBar>
        transformation (13).xlsx - LibreOffice Calc
        <WinControls>
          <Minimize />
          <Maximize />
          <CloseBtn><CloseX /></CloseBtn>
        </WinControls>
      </TitleBar>
      <MenuBar>
        {MENU.map((m) => <span key={m}>{m}</span>)}
      </MenuBar>
      <Toolbar $h={38}>
        <Grip $w={10.5} />
        {renderTools(TOOLS_ONE)}
      </Toolbar>
      <Toolbar $h={41}>
        <Grip $w={12} />
        <Combo $w={144} $mr={8} $italic>
          <ComboText $pl={12}>Calibri</ComboText>
          <ComboDrop $w={33} />
        </Combo>
        <Combo $w={85}>
          <ComboText $pl={11}>11</ComboText>
          <ComboDrop $w={33} />
        </Combo>
        <Sep $w={9} />
        {renderTools(TOOLS_TWO)}
      </Toolbar>
      <Workspace>
        <SheetColumn>
          <FormulaBar>
            <Combo $w={157}>
              <ComboText $pl={10}>C9</ComboText>
              <ComboDrop $w={33} />
            </Combo>
            <Sep $w={8} />
            <Tool $w={24}><Ico name="fxbar" size={20} /></Tool>
            <Tool $w={24}><Ico name="sigma" size={20} /></Tool>
            <Arrow $w={14} />
            <Tool $w={24}><Ico name="equals" size={18} /></Tool>
            <Sep $w={8} />
            <FormulaInput />
            <FormulaDrop />
          </FormulaBar>
          <SheetWrap>
            <Sheet>
              <ColHead />
              {COLS.map((c) => <ColHead key={c} $on={c === "C"}>{c}</ColHead>)}
              <RowHead>1</RowHead>
              {HEADS.map((h, i) => <Cell key={i} $head><div>{h}</div></Cell>)}
              {ROWS.map((r, i) => (
                <Row key={i} n={i + 2} r={r} />
              ))}
            </Sheet>
            <Scrollbar>
              <ScrollMinus />
              <ScrollThumb />
            </Scrollbar>
          </SheetWrap>
        </SheetColumn>
        <DeckStrip />
        <Deck>
          <DeckTool $h={24}><Ico name="gear" /></DeckTool>
          <DeckRule />
          <DeckTool $on $h={32}><Ico name="props" /></DeckTool>
          <DeckTool><Ico name="styles" /></DeckTool>
          <DeckTool><Ico name="gallery" /></DeckTool>
          <DeckTool><Ico name="nav" /></DeckTool>
          <DeckTool><Ico name="fx" /></DeckTool>
        </Deck>
      </Workspace>
    </CalcWindow>
  </Page>
);

export default App;
